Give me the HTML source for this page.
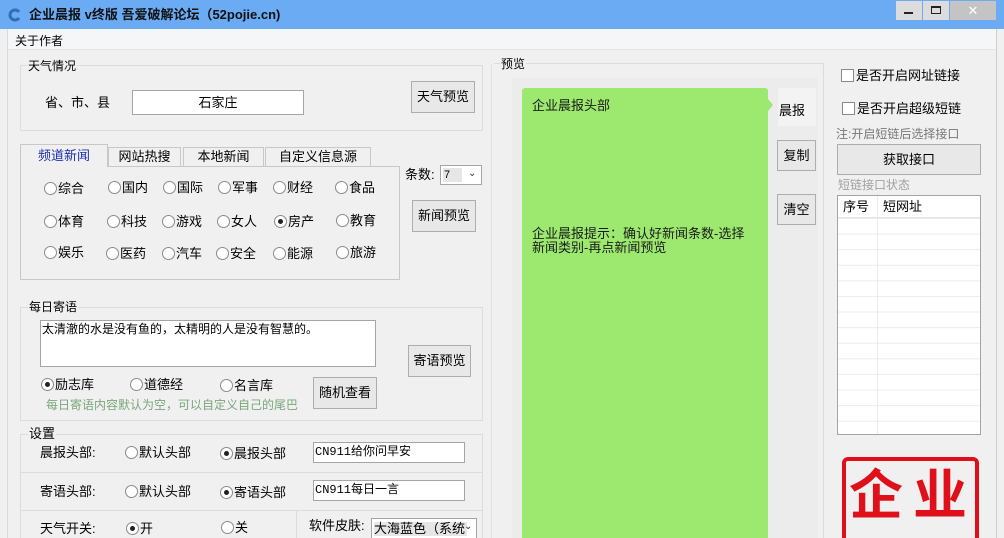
<!DOCTYPE html>
<html><head><meta charset="utf-8"><style>
*{margin:0;padding:0;box-sizing:border-box}
html,body{width:1004px;height:538px;overflow:hidden}
body{background:#f0f0f0;font-family:"Liberation Sans","Noto Sans CJK SC","WenQuanYi Zen Hei",sans-serif;font-size:12px;color:#000}
#w{position:relative;width:1004px;height:538px;overflow:hidden}
.a{position:absolute;white-space:nowrap}
.t{line-height:14px}
.gb{position:absolute;border:1px solid #dcdcdc}
.lbl{position:absolute;background:#f0f0f0;padding:0 1px;line-height:14px}
.btn{position:absolute;border:1px solid #adadad;background:#e8e8e8;text-align:center;font-size:13px}
.inp{position:absolute;background:#fff;border:1px solid #a5a5a5}
.r{position:absolute;width:13px;height:13px;border:1px solid #8a8a8a;border-radius:50%;background:#fff}
.r.on::after{content:"";position:absolute;left:3px;top:3px;width:5px;height:5px;border-radius:50%;background:#222}
.rt{position:absolute;line-height:14px;font-size:13px;white-space:nowrap}
.cb{position:absolute;width:13px;height:13px;border:1px solid #8a8a8a;background:#fff}
</style></head><body><div id="w">
<div class="a" style="left:0;top:0;width:1004px;height:29px;background:#6aabf3"></div>
<svg class="a" style="left:8px;top:8px" width="14" height="14" viewBox="0 0 14 14"><path d="M11 4 A5 5 0 1 0 11 10" fill="none" stroke="#2d6fb8" stroke-width="3"/></svg>
<div class="a" style="left:29px;top:7px;font-weight:bold;font-size:13px;color:#111;line-height:15px">企业晨报 v终版 吾爱破解论坛（52pojie.cn)</div>
<div class="a" style="left:896px;top:1px;width:26px;height:19px;background:#dcdcdc"></div>
<div class="a" style="left:904px;top:12px;width:9px;height:2px;background:#222"></div>
<div class="a" style="left:923px;top:1px;width:26px;height:19px;background:#dcdcdc"></div>
<div class="a" style="left:931px;top:6px;width:10px;height:8px;border:1px solid #222;border-top-width:2px"></div>
<div class="a" style="left:950px;top:1px;width:46px;height:19px;background:#c4c4c4;color:#fff;text-align:center;font-size:13px;line-height:19px">✕</div>
<div class="a" style="left:996px;top:29px;width:8px;height:509px;background:#f0f0f0;border-left:1px solid #cfcfcf"></div>
<div class="a" style="left:0;top:29px;width:996px;height:21px;background:#f5f6f7;border-bottom:1px solid #e4e4e4"></div>
<div class="a" style="left:0;top:29px;width:8px;height:509px;background:#f0f0f0;border-right:1px solid #dadada"></div>
<div class="a t" style="left:15px;top:34px;font-size:12px">关于作者</div>
<div class="a" style="left:491px;top:64px;width:1px;height:474px;background:#e0e0e0"></div>

<div class="gb" style="left:20px;top:65px;width:463px;height:66px"></div>
<div class="lbl" style="left:27px;top:59px;font-size:12px">天气情况</div>
<div class="a t" style="left:45px;top:96px;font-size:13px">省、市、县</div>
<div class="inp" style="left:132px;top:90px;width:172px;height:25px;text-align:center;line-height:23px;font-size:13px">石家庄</div>
<div class="btn" style="left:411px;top:81px;width:64px;height:32px;line-height:30px">天气预览</div>

<div class="a" style="left:20px;top:166px;width:380px;height:114px;border:1px solid #c8c8c8;background:#f0f0f0"></div>
<div class="a" style="left:20px;top:144px;width:88px;height:23px;border:1px solid #c8c8c8;border-bottom:none;background:#f0f0f0;color:#1a2eb0;text-align:center;line-height:22px;font-size:13px">频道新闻</div>
<div class="a" style="left:108px;top:147px;width:73px;height:19px;border:1px solid #c8c8c8;border-bottom:none;text-align:center;line-height:18px;font-size:13px">网站热搜</div>
<div class="a" style="left:183px;top:147px;width:81px;height:19px;border:1px solid #c8c8c8;border-bottom:none;text-align:center;line-height:18px;font-size:13px">本地新闻</div>
<div class="a" style="left:265px;top:147px;width:106px;height:19px;border:1px solid #c8c8c8;border-bottom:none;text-align:center;line-height:18px;font-size:13px">自定义信息源</div>

<div class="r" style="left:44px;top:182px"></div><div class="rt" style="left:58px;top:182px">综合</div>
<div class="r" style="left:108px;top:181px"></div><div class="rt" style="left:122px;top:181px">国内</div>
<div class="r" style="left:163px;top:181px"></div><div class="rt" style="left:177px;top:181px">国际</div>
<div class="r" style="left:218px;top:181px"></div><div class="rt" style="left:232px;top:181px">军事</div>
<div class="r" style="left:273px;top:181px"></div><div class="rt" style="left:287px;top:181px">财经</div>
<div class="r" style="left:335px;top:181px"></div><div class="rt" style="left:349px;top:181px">食品</div>
<div class="r" style="left:44px;top:215px"></div><div class="rt" style="left:58px;top:215px">体育</div>
<div class="r" style="left:107px;top:215px"></div><div class="rt" style="left:121px;top:215px">科技</div>
<div class="r" style="left:162px;top:215px"></div><div class="rt" style="left:176px;top:215px">游戏</div>
<div class="r" style="left:217px;top:215px"></div><div class="rt" style="left:231px;top:215px">女人</div>
<div class="r on" style="left:274px;top:215px"></div><div class="rt" style="left:288px;top:215px">房产</div>
<div class="r" style="left:336px;top:214px"></div><div class="rt" style="left:350px;top:214px">教育</div>
<div class="r" style="left:44px;top:246px"></div><div class="rt" style="left:58px;top:246px">娱乐</div>
<div class="r" style="left:106px;top:247px"></div><div class="rt" style="left:120px;top:247px">医药</div>
<div class="r" style="left:162px;top:247px"></div><div class="rt" style="left:176px;top:247px">汽车</div>
<div class="r" style="left:216px;top:247px"></div><div class="rt" style="left:230px;top:247px">安全</div>
<div class="r" style="left:273px;top:247px"></div><div class="rt" style="left:287px;top:247px">能源</div>
<div class="r" style="left:336px;top:246px"></div><div class="rt" style="left:350px;top:246px">旅游</div>

<div class="a t" style="left:405px;top:168px;font-size:13px">条数:</div>
<div class="a" style="left:440px;top:165px;width:42px;height:20px;background:#fff;border:1px solid #a5a5a5"></div>
<div class="a" style="left:443px;top:168px;width:19px;height:14px;background:#e6e6e6;font-size:11px;line-height:14px;padding-left:1px">7</div>
<div class="a" style="left:468px;top:168px;font-size:10px;color:#333">&#8964;</div>
<div class="btn" style="left:412px;top:200px;width:64px;height:32px;line-height:30px">新闻预览</div>

<div class="gb" style="left:20px;top:307px;width:463px;height:114px"></div>
<div class="lbl" style="left:28px;top:300px;font-size:12px">每日寄语</div>
<div class="inp" style="left:40px;top:320px;width:336px;height:47px;font-size:12px;line-height:14px;padding-left:1px;padding-top:1px">太清澈的水是没有鱼的，太精明的人是没有智慧的。</div>
<div class="btn" style="left:408px;top:345px;width:63px;height:32px;line-height:30px">寄语预览</div>
<div class="r on" style="left:41px;top:378px"></div><div class="rt" style="left:55px;top:378px">励志库</div>
<div class="r" style="left:130px;top:378px"></div><div class="rt" style="left:144px;top:378px">道德经</div>
<div class="r" style="left:220px;top:379px"></div><div class="rt" style="left:234px;top:379px">名言库</div>
<div class="btn" style="left:313px;top:377px;width:64px;height:32px;line-height:30px">随机查看</div>
<div class="a t" style="left:46px;top:398px;font-size:12px;color:#7aa67a">每日寄语内容默认为空，可以自定义自己的尾巴</div>

<div class="gb" style="left:20px;top:434px;width:463px;height:39px"></div>
<div class="gb" style="left:20px;top:472px;width:463px;height:39px"></div>
<div class="gb" style="left:20px;top:510px;width:463px;height:30px"></div>
<div class="a" style="left:296px;top:510px;width:1px;height:28px;background:#dcdcdc"></div>
<div class="lbl" style="left:28px;top:427px;font-size:13px">设置</div>
<div class="a t" style="left:40px;top:446px;font-size:13px">晨报头部:</div>
<div class="r" style="left:125px;top:446px"></div><div class="rt" style="left:139px;top:446px">默认头部</div>
<div class="r on" style="left:220px;top:447px"></div><div class="rt" style="left:234px;top:447px">晨报头部</div>
<div class="inp" style="left:313px;top:442px;width:152px;height:21px;font-family:'Liberation Mono','Noto Sans CJK SC',monospace;font-size:12px;line-height:19px;padding-left:1px">CN911给你问早安</div>
<div class="a t" style="left:40px;top:485px;font-size:13px">寄语头部:</div>
<div class="r" style="left:125px;top:485px"></div><div class="rt" style="left:139px;top:485px">默认头部</div>
<div class="r on" style="left:220px;top:486px"></div><div class="rt" style="left:234px;top:486px">寄语头部</div>
<div class="inp" style="left:313px;top:480px;width:152px;height:21px;font-family:'Liberation Mono','Noto Sans CJK SC',monospace;font-size:12px;line-height:19px;padding-left:1px">CN911每日一言</div>
<div class="a t" style="left:40px;top:522px;font-size:13px">天气开关:</div>
<div class="r on" style="left:126px;top:522px"></div><div class="rt" style="left:140px;top:522px">开</div>
<div class="r" style="left:221px;top:521px"></div><div class="rt" style="left:235px;top:521px">关</div>
<div class="a t" style="left:309px;top:519px;font-size:13px">软件皮肤:</div>
<div class="a" style="left:371px;top:518px;width:106px;height:22px;background:#fff;border:1px solid #a5a5a5"></div>
<div class="a t" style="left:374px;top:522px;background:#e6e6e6;font-size:13px;padding-right:2px">大海蓝色（系统</div>
<div class="a" style="left:464px;top:521px;font-size:10px;color:#333">&#8964;</div>

<div class="a" style="left:494px;top:63px;width:330px;height:475px;border-top:1px solid #dcdcdc;border-right:1px solid #dcdcdc"></div>
<div class="lbl" style="left:500px;top:57px;font-size:12px">预览</div>
<div class="a" style="left:512px;top:78px;width:306px;height:460px;background:#ececec"></div>
<div class="a" style="left:522px;top:88px;width:246px;height:450px;background:#9de86f;border-radius:3px 3px 0 0"></div>
<div class="a" style="left:768px;top:99px;width:0;height:0;border-top:6px solid transparent;border-bottom:6px solid transparent;border-left:5px solid #9de86f"></div>
<div class="a t" style="left:532px;top:99px;font-size:13px;color:#1a1a1a">企业晨报头部</div>
<div class="a" style="left:532px;top:227px;font-size:13px;line-height:14px;color:#1a1a1a;white-space:normal;width:225px">企业晨报提示：确认好新闻条数-选择新闻类别-再点新闻预览</div>
<div class="a" style="left:778px;top:88px;width:38px;height:38px;background:#f3f3f3"></div>
<div class="a t" style="left:779px;top:104px;font-size:13px">晨报</div>
<div class="btn" style="left:777px;top:140px;width:39px;height:31px;line-height:29px">复制</div>
<div class="btn" style="left:777px;top:194px;width:39px;height:31px;line-height:29px">清空</div>

<div class="cb" style="left:841px;top:69px"></div><div class="a t" style="left:856px;top:69px;font-size:13px">是否开启网址链接</div>
<div class="cb" style="left:842px;top:102px"></div><div class="a t" style="left:857px;top:102px;font-size:13px">是否开启超级短链</div>
<div class="a t" style="left:836px;top:127px;font-size:12px;color:#777">注:开启短链后选择接口</div>
<div class="btn" style="left:837px;top:144px;width:144px;height:31px;line-height:29px">获取接口</div>
<div class="a t" style="left:838px;top:178px;font-size:12px;color:#a0a0a0">短链接口状态</div>
<div class="a" style="left:837px;top:195px;width:144px;height:240px;background:#fff;border:1px solid #a5a5a5;overflow:hidden;background-image:linear-gradient(#ececec 1px,transparent 1px);background-size:100% 15.6px;background-position:0 22px"></div>
<div class="a" style="left:838px;top:196px;width:142px;height:22px;background:#fff;border-bottom:1px solid #e4e4e4"></div>
<div class="a" style="left:877px;top:196px;width:1px;height:238px;background:#ececec"></div>
<div class="a t" style="left:843px;top:200px;font-size:13px">序号</div>
<div class="a t" style="left:883px;top:200px;font-size:13px">短网址</div>

<div class="a" style="left:842px;top:457px;width:137px;height:100px;border:4px solid #e0101a;border-radius:6px"></div>
<div class="a" style="left:849px;top:462px;font-family:'Noto Sans CJK SC',sans-serif;font-weight:bold;font-size:54px;line-height:58px;color:#e0101a;letter-spacing:10px">企业</div>
</div></body></html>
